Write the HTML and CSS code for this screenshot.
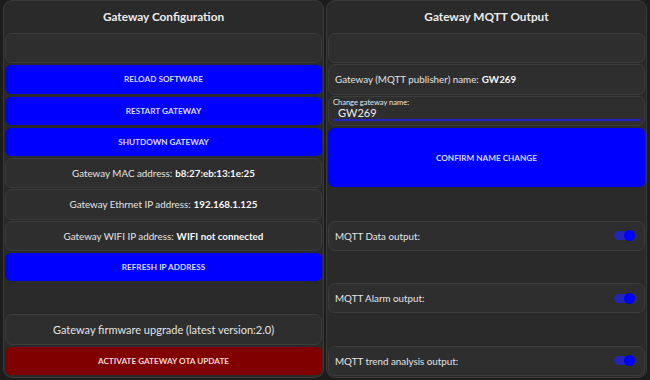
FILE: index.html
```html
<!DOCTYPE html>
<html lang="en">
<head>
  <meta charset="UTF-8">
  <meta name="viewport" content="width=device-width, initial-scale=1.0">
  <title>Gateway</title>
  <link rel="stylesheet" href="styles.css">
</head>
<body>
  <div class="page">

    <div class="column">
      <div class="title">Gateway Configuration</div>
      <div class="card"></div>
      <button class="btn">RELOAD SOFTWARE</button>
      <button class="btn">RESTART GATEWAY</button>
      <button class="btn">SHUTDOWN GATEWAY</button>
      <div class="card center">Gateway MAC address: <b>b8:27:eb:13:1e:25</b></div>
      <div class="card center">Gateway Ethrnet IP address: <b>192.168.1.125</b></div>
      <div class="card center">Gateway WIFI IP address: <b>WIFI not connected</b></div>
      <button class="btn">REFRESH IP ADDRESS</button>
      <div class="blank"></div>
      <div class="card center big">Gateway firmware upgrade (latest version:2.0)</div>
      <button class="btn red">ACTIVATE GATEWAY OTA UPDATE</button>
    </div>

    <div class="column">
      <div class="title">Gateway MQTT Output</div>
      <div class="card"></div>
      <div class="card left">Gateway (MQTT publisher) name: <b>GW269</b></div>
      <div class="card field">
        <label for="gwname">Change gateway name:</label>
        <input type="text" id="gwname" value="GW269">
      </div>
      <button class="btn tall">CONFIRM NAME CHANGE</button>
      <div class="blank"></div>
      <div class="card left toggle-row">MQTT Data output: <span class="switch"></span></div>
      <div class="blank"></div>
      <div class="card left toggle-row">MQTT Alarm output: <span class="switch"></span></div>
      <div class="blank"></div>
      <div class="card left toggle-row">MQTT trend analysis output: <span class="switch"></span></div>
    </div>

  </div>
</body>
</html>
```

FILE: styles.css
```css
*{
  margin: 0;
  padding: 0;
  box-sizing: border-box;
}
body{
  background: #1c1c1c;
  font-family: "Lato", "Open Sans", sans-serif;
  color: #e4e4e4;
}
.page{
  display: grid;
  grid-template-columns: 1fr 1fr;
  gap: 2px;
  padding: 0 3px;
  height: 380px;
}
.column{
  height: 378px;
  background: #2a2a2a;
  border: 1px solid #3a3a3a;
  border-radius: 9px;
  padding: 0 1px 1px;
  display: grid;
  grid-template-rows: 31px repeat(11, 1fr);
  row-gap: 1px;
}
.title{
  display: flex;
  align-items: center;
  justify-content: center;
  font-weight: bold;
  font-size: 11.8px;
  color: #ececec;
}
.card{
  background: #2e2e2e;
  border: 1px solid #3c3c3c;
  border-radius: 7px;
  display: flex;
  align-items: center;
  font-size: 9.8px;
}
.card b{
  color: #fafafa;
  margin-left: 3px;
}
.center{
  justify-content: center;
}
.big{
  font-size: 11px;
}
.left{
  padding-left: 6px;
}
.btn{
  margin: 1px 0;
  border: none;
  border-radius: 6px;
  background: #0000ff;
  color: #dcdcff;
  font-family: inherit;
  font-weight: bold;
  font-size: 8.2px;
}
.red{
  background: #800000;
  color: #f0d8d8;
}
.tall{
  grid-row: span 2;
  margin-top: 1px;
}
.field{
  flex-direction: column;
  align-items: stretch;
  justify-content: center;
  padding: 0 4px 2px;
}
.field label{
  font-size: 7.5px;
  line-height: 8px;
  color: #e8e8e8;
}
.field input{
  background: transparent;
  border: none;
  border-bottom: 2px solid #2323c8;
  color: #f0f0f0;
  font-family: inherit;
  font-size: 11px;
  padding-left: 5px;
  height: 14px;
  line-height: 12px;
  outline: none;
}
.toggle-row{
  justify-content: space-between;
  padding-right: 10px;
}
.switch{
  position: relative;
  width: 20px;
  height: 9px;
  border-radius: 5px;
  background: #2424b8;
}
.switch::after{
  content: "";
  position: absolute;
  right: -1px;
  top: -1px;
  width: 11px;
  height: 11px;
  border-radius: 50%;
  background: #0000ff;
}
```
